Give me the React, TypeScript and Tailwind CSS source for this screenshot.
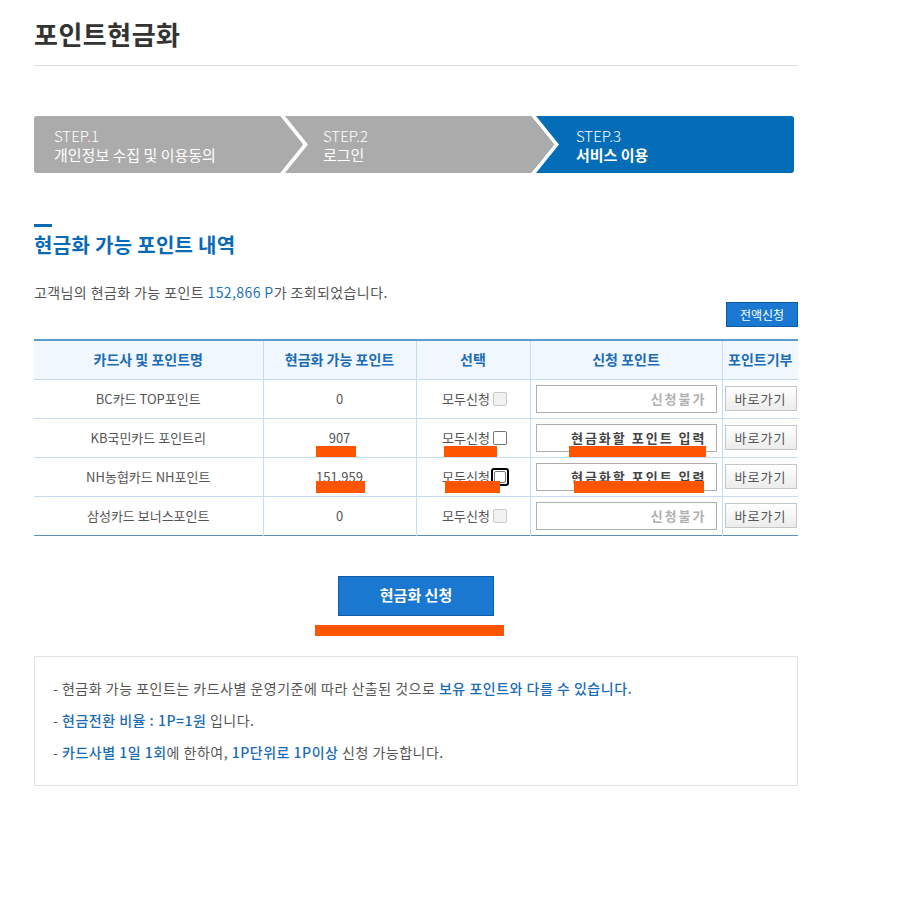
import React from "react";

const font = { fontFamily: '"Noto Sans CJK KR", "Noto Sans", sans-serif' };

type Step = { no: string; label: string; active?: boolean };

const steps: Step[] = [
  { no: "STEP.1", label: "개인정보 수집 및 이용동의" },
  { no: "STEP.2", label: "로그인" },
  { no: "STEP.3", label: "서비스 이용", active: true },
];

type Row = {
  name: string;
  points: string;
  enabled: boolean;
  focused?: boolean;
  mark?: "a" | "b";
};

const rows: Row[] = [
  { name: "BC카드 TOP포인트", points: "0", enabled: false },
  { name: "KB국민카드 포인트리", points: "907", enabled: true, mark: "a" },
  { name: "NH농협카드 NH포인트", points: "151,959", enabled: true, focused: true, mark: "b" },
  { name: "삼성카드 보너스포인트", points: "0", enabled: false },
];

function StepArrow({ color }: { color: string }) {
  return (
    <svg
      className="absolute top-0 -right-[28px] z-10"
      width="32"
      height="57"
      viewBox="0 0 32 57"
    >
      <polygon points="0,0 5,0 28,28.5 5,57 0,57 23,28.5" fill="#ffffff" />
      <polygon points="0,0 23,28.5 0,57" fill={color} />
    </svg>
  );
}

function Mark({ className }: { className: string }) {
  return <div className={`absolute bg-[#ff5500] ${className}`} />;
}

export default function App() {
  return (
    <div className="bg-white min-h-[900px] pl-[34px] pr-[102px]" style={font}>
      {/* Title */}
      <div className="h-[66px] pt-[14px] border-b border-[#dcdcdc]">
        <h1 className="text-[26px] leading-[40px] font-bold text-[#333] tracking-[0.5px]">포인트현금화</h1>
      </div>

      {/* Steps */}
      <div className="mt-[50px] mr-[4px] flex h-[57px] rounded-[3px] overflow-hidden">
        {steps.map((s, i) => (
          <div
            key={s.no}
            className={`relative flex flex-col justify-center text-white text-[15px] leading-[19px] ${
              i === 0 ? "w-[250px] pl-[20px] bg-[#ababab]" : i === 1 ? "w-[251px] pl-[39px] bg-[#ababab]" : "flex-1 pl-[41px] bg-[#046db8]"
            }`}
          >
            <span className="font-light">{s.no}</span>
            <span className={s.active ? "font-bold" : ""}>{s.label}</span>
            {i < steps.length - 1 && <StepArrow color="#ababab" />}
          </div>
        ))}
      </div>

      {/* Section heading */}
      <div className="mt-[51px] w-[18px] h-[3px] bg-[#0a6ab6]" />
      <h2 className="mt-[4px] text-[20px] leading-[28px] font-bold text-[#0a6ab6] tracking-[0.3px]">현금화 가능 포인트 내역</h2>

      <p className="mt-[23px] text-[14px] leading-[20px] text-[#555] tracking-[0.4px]">
        고객님의 현금화 가능 포인트 <span className="text-[#1a72c4]">152,866 P</span>가 조회되었습니다.
      </p>

      <div className="flex justify-end">
        <button className="h-[25px] w-[72px] bg-[#1a78d0] border border-[#0d5aa7] text-white text-[12px]">전액신청</button>
      </div>

      {/* Table */}
      <table className="mt-[12px] w-full table-fixed border-collapse border-t-2 border-t-[#5b9bd0] border-b border-b-[#5a8fc0]">
        <colgroup>
          <col className="w-[229px]" />
          <col className="w-[153px]" />
          <col className="w-[114px]" />
          <col className="w-[192px]" />
          <col className="w-[76px]" />
        </colgroup>
        <thead>
          <tr className="h-[39px] bg-[#f0f7fe] text-[14px] font-bold text-[#1b6cb6]">
            <th className="border-r border-[#c4ddf2]">카드사 및 포인트명</th>
            <th className="border-r border-[#c4ddf2]">현금화 가능 포인트</th>
            <th className="border-r border-[#c4ddf2]">선택</th>
            <th className="border-r border-[#c4ddf2]">신청 포인트</th>
            <th>포인트기부</th>
          </tr>
        </thead>
        <tbody className="text-[13px] text-[#555]">
          {rows.map((r) => (
            <tr key={r.name} className="h-[39px] border-t border-[#c4ddf2]">
              <td className="text-center border-r border-[#c4ddf2]">{r.name}</td>
              <td className="relative text-center border-r border-[#c4ddf2]">
                {r.points}
                {r.mark === "a" && <Mark className="left-[52px] bottom-0 w-[40px] h-[11px]" />}
                {r.mark === "b" && <Mark className="left-[52px] bottom-[3px] w-[49px] h-[12px]" />}
              </td>
              <td className="relative border-r border-[#c4ddf2]">
                <div className="flex items-center justify-center gap-[3px] pl-[3px]">
                  <span>모두신청</span>
                  {r.enabled ? (
                    r.focused ? (
                      <span className="w-[18px] h-[18px] -ml-[2px] -mr-[2px] rounded-[3px] border-2 border-black flex items-center justify-center">
                        <span className="w-[12px] h-[12px] rounded-[2px] border border-[#767676] bg-white" />
                      </span>
                    ) : (
                      <span className="w-[14px] h-[14px] rounded-[2px] border border-[#767676] bg-white" />
                    )
                  ) : (
                    <span className="w-[14px] h-[14px] rounded-[2px] border border-[#c8c8c8] bg-[#f2f2f2]" />
                  )}
                </div>
                {r.mark === "a" && <Mark className="left-[27px] bottom-0 w-[53px] h-[11px]" />}
                {r.mark === "b" && <Mark className="left-[28px] bottom-[3px] w-[55px] h-[12px]" />}
              </td>
              <td className="relative border-r border-[#c4ddf2] px-[5px]">
                <div
                  className={`h-[28px] border border-[#adadad] bg-white flex items-center justify-end pr-[9px] text-[13px] font-bold tracking-[2px] ${
                    r.enabled ? "text-[#444]" : "text-[#b0b0b0]"
                  }`}
                >
                  {r.enabled ? "현금화할 포인트 입력" : "신청불가"}
                </div>
                {r.mark === "a" && <Mark className="left-[38px] bottom-0 w-[137px] h-[11px]" />}
                {r.mark === "b" && <Mark className="left-[43px] bottom-[3px] w-[130px] h-[12px]" />}
              </td>
              <td className="pl-[2px]">
                <button className="w-[72px] h-[25px] border border-[#c6c6c6] bg-gradient-to-b from-white to-[#ececec] text-[13px] text-[#555] tracking-[1px]">
                  바로가기
                </button>
              </td>
            </tr>
          ))}
        </tbody>
      </table>

      {/* Submit */}
      <div className="mt-[40px] flex justify-center">
        <button className="w-[156px] h-[40px] bg-[#1a78d0] border border-[#0d5aa7] text-white text-[15px] font-bold">
          현금화 신청
        </button>
      </div>
      <div className="mt-[9px] ml-[281px] w-[189px] h-[11px] bg-[#ff5500]" />

      {/* Notice */}
      <div className="mt-[20px] border border-[#e3e3e3] pt-[15px] pb-[17px] pl-[18px] text-[14px] leading-[32px] text-[#555] tracking-[0.5px]">
        <p>
          - 현금화 가능 포인트는 카드사별 운영기준에 따라 산출된 것으로{" "}
          <span className="text-[#1a6cb6] font-medium">보유 포인트와 다를 수 있습니다.</span>
        </p>
        <p>
          - <span className="text-[#1a6cb6] font-medium">현금전환 비율 : 1P=1원</span> 입니다.
        </p>
        <p>
          - <span className="text-[#1a6cb6] font-medium">카드사별 1일 1회</span>에 한하여,{" "}
          <span className="text-[#1a6cb6] font-medium">1P단위로 1P이상</span> 신청 가능합니다.
        </p>
      </div>
    </div>
  );
}
